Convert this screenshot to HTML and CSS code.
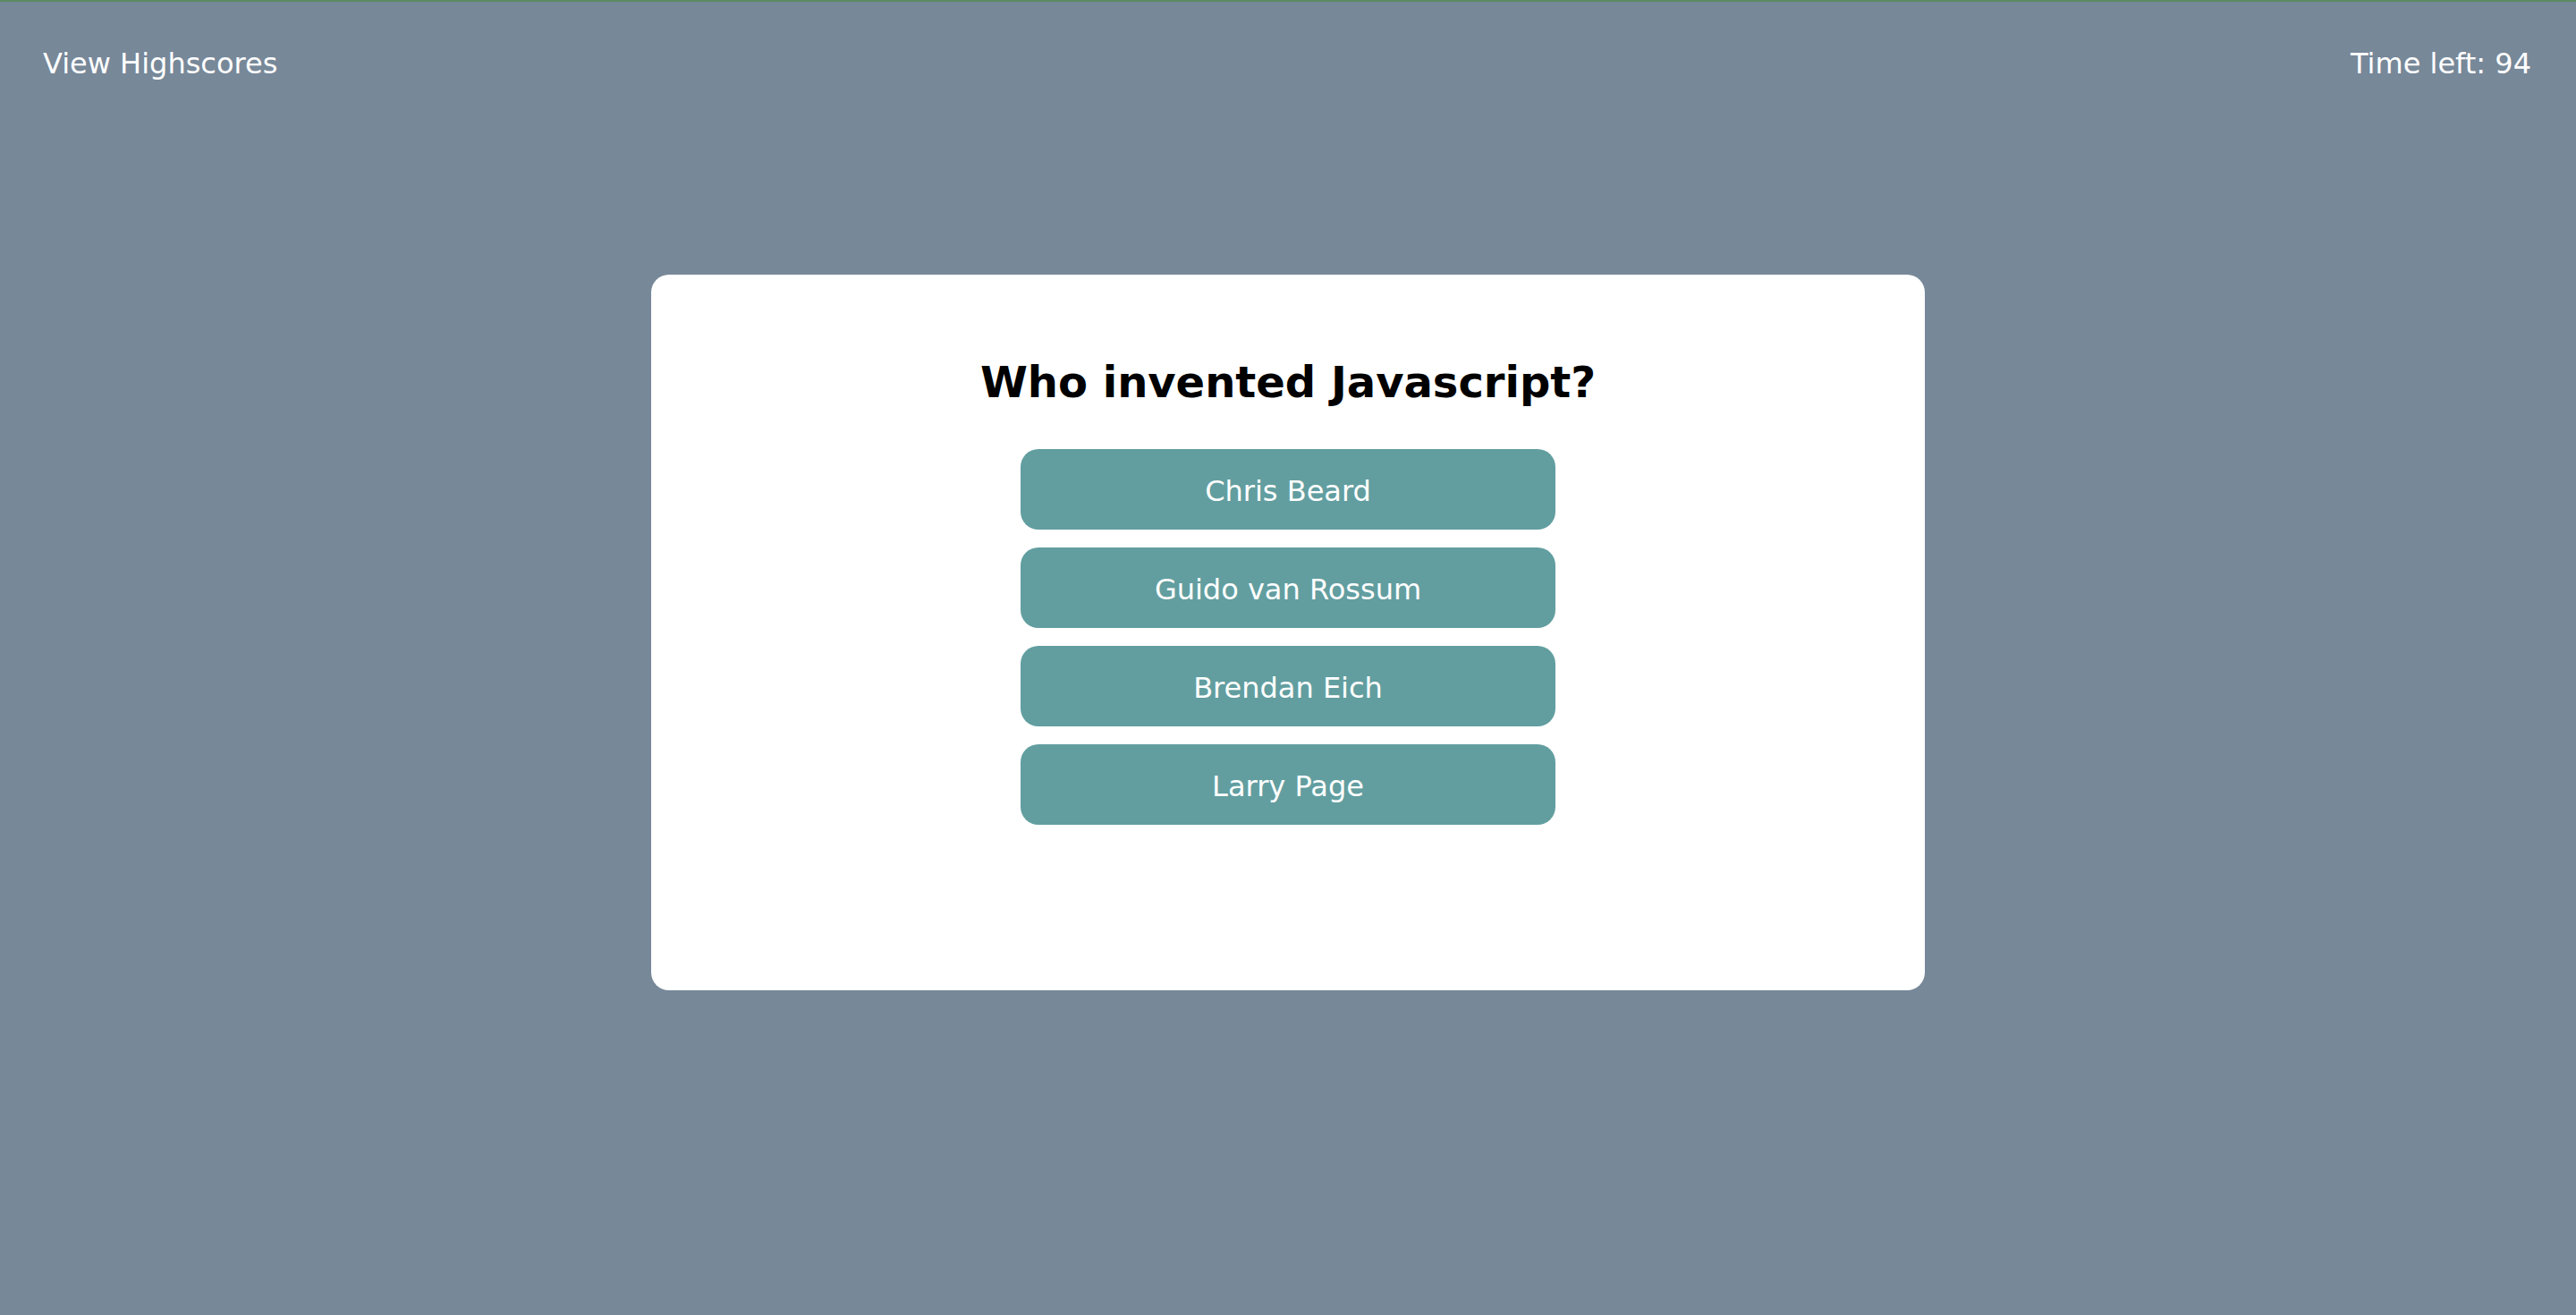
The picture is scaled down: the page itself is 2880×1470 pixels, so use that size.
FILE: index.html
```html
<!DOCTYPE html>
<html lang="en">
<head>
<meta charset="utf-8">
<title>Code Quiz</title>
<link rel="stylesheet" href="styles.css">
</head>
<body>
<header class="topbar">
  <a class="highscores" href="#">View Highscores</a>
  <div class="timer">Time left: <span>94</span></div>
</header>
<main class="stage">
  <section class="card">
    <h2 class="question">Who invented Javascript?</h2>
    <div class="answers">
      <button class="answer">Chris Beard</button>
      <button class="answer">Guido van Rossum</button>
      <button class="answer">Brendan Eich</button>
      <button class="answer">Larry Page</button>
    </div>
  </section>
</main>
</body>
</html>
```

FILE: styles.css
```css
html, body {
  margin: 0;
  padding: 0;
}
body {
  width: 2880px;
  height: 1470px;
  overflow: hidden;
  box-sizing: border-box;
  background: #778899;
  border-top: 2px solid #5b8a5f;
  font-family: "DejaVu Sans", Verdana, sans-serif;
  font-size: 32px;
  color: #ffffff;
}
.topbar {
  display: flex;
  justify-content: space-between;
  align-items: flex-start;
  padding: 50px 50px 0 48px;
  line-height: normal;
}
.highscores {
  color: #ffffff;
  text-decoration: none;
}
.timer {
  color: #ffffff;
}
.stage {
  display: flex;
  justify-content: center;
  padding-top: 217px;
}
.card {
  width: 1424px;
  height: 800px;
  box-sizing: border-box;
  background: #ffffff;
  border-radius: 20px;
  padding-top: 92px;
  display: flex;
  flex-direction: column;
  align-items: center;
}
.question {
  margin: 0;
  font-size: 48px;
  font-weight: bold;
  color: #000000;
  line-height: normal;
}
.answers {
  margin-top: 47px;
  display: flex;
  flex-direction: column;
  gap: 20px;
}
.answer {
  width: 598px;
  height: 90px;
  border: none;
  border-radius: 20px;
  background: #629ea0;
  color: #ffffff;
  font-family: "DejaVu Sans", Verdana, sans-serif;
  font-size: 32px;
  padding: 3px 0 0;
  cursor: pointer;
}
```
